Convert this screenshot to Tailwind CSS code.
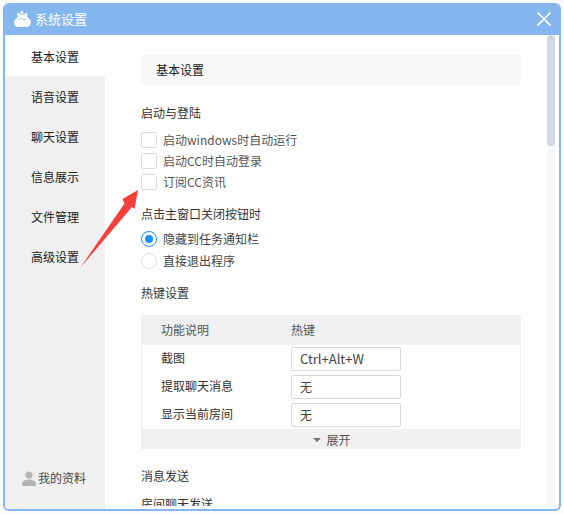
<!DOCTYPE html>
<html lang="zh-CN">
<head>
    <meta charset="UTF-8">
    <title>系统设置</title>
    <script src="https://cdn.jsdelivr.net/npm/@tailwindcss/browser@4"></script>
</head>
<body class="bg-[#fbfbfb] font-['Noto_Sans_CJK_SC',sans-serif] text-[12px] leading-[20px] overflow-hidden">
    <div class="w-[564px] h-[514px] p-[3px]">
        <div class="relative w-[558px] h-[508px] flex flex-col bg-white border-[2px] border-t-0 border-[#84b7ee] rounded-[6px] overflow-hidden">
            <!-- title bar -->
            <div class="h-[32px] shrink-0 -mx-[2px] bg-[#84b7ee] flex items-center pl-[11px] pr-[10px] text-white">
                <svg class="w-[17px] h-[16px]" viewBox="0 0 17 16" fill="#fff">
                    <path d="M8.500 3.500c3.300 0 5 1.800 5.800 4 1.600.6 2.500 2 2.500 3.700 0 2.700-2 4.800-4.800 4.800H4.500C1.800 16 .2 13.900.2 11.200c0-1.700.9-3.100 2.500-3.700.8-2.200 2.500-4 5.800-4z"/>
                    <circle cx="4.500" cy="3.500" r="1.500"/>
                    <circle cx="8" cy="1.500" r="1.400"/>
                    <circle cx="12" cy="3.500" r="1.500"/>
                    <path d="M4.500 8.500c1.500-1.500 3-1.500 4-.5s2.500 1 4 0" stroke="#84b7ee" stroke-width=".9" fill="none"/>
                </svg>
                <span class="ml-[4px] text-[13px]">系统设置</span>
                <svg class="ml-auto w-[14px] h-[14px]" viewBox="0 0 14 14" stroke="#fff" stroke-width="1.700" fill="none">
                    <path d="M.6.600l12.800 12.800M13.400.600L.6 13.400"/>
                </svg>
            </div>
            <div class="flex flex-1 min-h-0">
                <!-- side menu -->
                <div class="w-[100px] shrink-0 bg-[#f0f0f0] flex flex-col text-[#222]">
                    <div class="h-[41px] bg-white pl-[26px] pt-[2px] flex items-center">基本设置</div>
                    <div class="h-[40px] pl-[26px] pt-[2px] flex items-center">语音设置</div>
                    <div class="h-[40px] pl-[26px] pt-[2px] flex items-center">聊天设置</div>
                    <div class="h-[40px] pl-[26px] pt-[2px] flex items-center">信息展示</div>
                    <div class="h-[40px] pl-[26px] pt-[2px] flex items-center">文件管理</div>
                    <div class="h-[40px] pl-[26px] pt-[2px] flex items-center">高级设置</div>
                    <div class="mt-auto mb-[21px] pl-[17px] flex items-center text-[#444]">
                        <svg class="w-[14px] h-[15px] mr-[2px]" viewBox="0 0 14 15" fill="#b4b4b4">
                            <circle cx="7" cy="4" r="3.600"/>
                            <path d="M0 15v-2c0-3 3-4.500 7-4.500s7 1.500 7 4.500v2z"/>
                        </svg>
                        <span>我的资料</span>
                    </div>
                </div>
                <!-- content -->
                <div class="flex-1 min-w-0 mb-[3px] pl-[36px] pt-[20px] overflow-hidden text-[#333]">
                    <div class="w-[380px] h-[30px] bg-[#f7f7f7] pl-[15px] flex items-center text-[#222]">基本设置</div>
                    <div class="mt-[18px] h-[20px]">启动与登陆</div>
                    <div class="mt-[9px] flex flex-col gap-[5px] text-[#555]">
                        <label class="flex items-center h-[16px]"><span class="w-[16px] h-[16px] border border-[#dcdcdc] rounded-[2px] mr-[6px]"></span>启动windows时自动运行</label>
                        <label class="flex items-center h-[16px]"><span class="w-[16px] h-[16px] border border-[#dcdcdc] rounded-[2px] mr-[6px]"></span>启动CC时自动登录</label>
                        <label class="flex items-center h-[16px]"><span class="w-[16px] h-[16px] border border-[#dcdcdc] rounded-[2px] mr-[6px]"></span>订阅CC资讯</label>
                    </div>
                    <div class="mt-[14px] h-[20px]">点击主窗口关闭按钮时</div>
                    <div class="mt-[7px] flex flex-col gap-[6px] text-[#444]">
                        <label class="flex items-center h-[16px]"><span class="w-[16px] h-[16px] border border-[#1890ff] rounded-full mr-[6px] flex items-center justify-center"><span class="w-[8px] h-[8px] rounded-full bg-[#1890ff]"></span></span>隐藏到任务通知栏</label>
                        <label class="flex items-center h-[16px]"><span class="w-[16px] h-[16px] border border-[#dcdcdc] rounded-full mr-[6px]"></span>直接退出程序</label>
                    </div>
                    <div class="mt-[14px] h-[20px]">热键设置</div>
                    <!-- hotkey table -->
                    <div class="mt-[12px] w-[380px] border-x border-[#f0f0f0]">
                        <div class="h-[30px] bg-[#f0f0f0] flex items-center text-[#555]">
                            <span class="w-[149px] pl-[19px]">功能说明</span>
                            <span>热键</span>
                        </div>
                        <div class="flex flex-col gap-[4px] pt-[2px] pb-[2px]">
                            <div class="h-[24px] flex items-center">
                                <span class="w-[149px] pl-[19px] pb-[2px]">截图</span>
                                <span class="w-[110px] h-[24px] border border-[#d9d9d9] rounded-[2px] pl-[8px] flex items-center text-[#444] text-[13px]">Ctrl+Alt+W</span>
                            </div>
                            <div class="h-[24px] flex items-center">
                                <span class="w-[149px] pl-[19px] pb-[2px]">提取聊天消息</span>
                                <span class="w-[110px] h-[24px] border border-[#d9d9d9] rounded-[2px] pl-[8px] flex items-center text-[#444]">无</span>
                            </div>
                            <div class="h-[24px] flex items-center">
                                <span class="w-[149px] pl-[19px] pb-[2px]">显示当前房间</span>
                                <span class="w-[110px] h-[24px] border border-[#d9d9d9] rounded-[2px] pl-[8px] flex items-center text-[#444]">无</span>
                            </div>
                        </div>
                        <div class="h-[20px] bg-[#f0f0f0] flex items-center justify-center pl-[2px] pt-[2px] text-[#555]">
                            <span class="w-0 h-0 border-x-[4px] border-x-transparent border-t-[4px] border-t-[#777] mr-[5px]"></span>展开
                        </div>
                    </div>
                    <div class="mt-[17px] h-[20px]">消息发送</div>
                    <div class="mt-[8px] h-[20px]">房间聊天发送</div>
                </div>
                <!-- scrollbar -->
                <div class="w-[8px] shrink-0 mr-[4px] mb-[4px] bg-[#f7f7f7] rounded-[4px]">
                    <div class="h-[111px] bg-[#cfd9e4] rounded-[4px]"></div>
                </div>
            </div>
            <!-- red annotation arrow -->
            <svg class="absolute left-[-5px] top-[-3px] pointer-events-none" width="564" height="514" fill="#f5403c">
                <polygon points="80,268 124.500,203.500 122.500,199 138,190 134.500,209 132,207"/>
            </svg>
        </div>
    </div>
</body>
</html>
